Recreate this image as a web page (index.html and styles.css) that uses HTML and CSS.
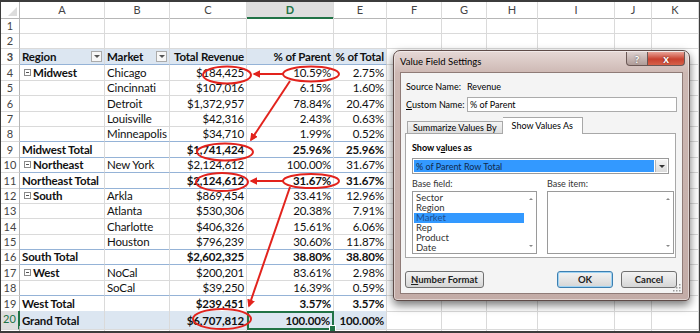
FILE: index.html
```html
<!DOCTYPE html>
<html lang="en">
<head>
  <meta charset="UTF-8">
  <title>Percent of Parent Row Total</title>
  <link rel="stylesheet" href="styles.css">
</head>
<body>
  <div class="frame">
    <div class="sheet" id="sheet"></div>
  </div>

  <svg class="marks" width="700" height="333" viewBox="0 0 700 333">
    <defs>
      <marker id="head" viewBox="0 0 10 10" refX="8" refY="5" markerWidth="4" markerHeight="4" orient="auto">
        <path d="M0 0 L10 5 L0 10 z" fill="#e2231d"/>
      </marker>
    </defs>
    <g fill="none" stroke="#e2231d" stroke-width="2">
      <ellipse cx="227" cy="75" rx="24" ry="8.5"/>
      <ellipse cx="311" cy="74" rx="28" ry="7.5"/>
      <ellipse cx="225" cy="152" rx="28" ry="8.5"/>
      <ellipse cx="222" cy="182" rx="26" ry="9"/>
      <ellipse cx="311" cy="181" rx="28" ry="7"/>
      <ellipse cx="222" cy="319" rx="29" ry="10"/>
      <path d="M283 74 L254 74" marker-end="url(#head)"/>
      <path d="M290 81 L251 140" marker-end="url(#head)"/>
      <path d="M283 181 L251 181" marker-end="url(#head)"/>
      <path d="M290 187 L249 306" marker-end="url(#head)"/>
    </g>
  </svg>

  <div class="dialog">
    <div class="dlg-title">
      <span>Value Field Settings</span>
      <div class="dlg-ctrls">
        <span class="ctrl-help">?</span>
        <span class="ctrl-close">x</span>
      </div>
    </div>
    <div class="dlg-body">
      <div class="field">
        <span class="label">Source Name:</span>
        <span>Revenue</span>
      </div>
      <div class="field">
        <span class="label"><u>C</u>ustom Name:</span>
        <div class="textbox">% of Parent</div>
      </div>
      <div class="tabs">
        <div class="tab">Summarize Values By</div>
        <div class="tab active">Show Values As</div>
      </div>
      <div class="panel">
        <div class="panel-title">Show v<u>a</u>lues as</div>
        <div class="combo">
          <div class="combo-value">% of Parent Row Total</div>
          <div class="combo-btn"><i class="tri-down"></i></div>
        </div>
        <div class="lists">
          <div class="list-col">
            <div class="list-label">Base field:</div>
            <div class="listbox">
              <div class="items">
                <div>Sector</div>
                <div>Region</div>
                <div class="sel">Market</div>
                <div>Rep</div>
                <div>Product</div>
                <div>Date</div>
              </div>
              <div class="scroll"><i class="tri-up"></i><i class="tri-down"></i></div>
            </div>
          </div>
          <div class="list-col">
            <div class="list-label">Base item:</div>
            <div class="listbox">
              <div class="items"></div>
              <div class="scroll"><i class="tri-up"></i><i class="tri-down"></i></div>
            </div>
          </div>
        </div>
      </div>
      <div class="actions">
        <button class="btn"><u>N</u>umber Format</button>
        <span class="spacer"></span>
        <button class="btn btn-default">OK</button>
        <button class="btn">Cancel</button>
      </div>
      <svg class="grip" width="8" height="8" viewBox="0 0 8 8">
        <g fill="#9a9a9a">
          <rect x="6" y="0" width="1.5" height="1.5"/>
          <rect x="3" y="3" width="1.5" height="1.5"/>
          <rect x="6" y="3" width="1.5" height="1.5"/>
          <rect x="0" y="6" width="1.5" height="1.5"/>
          <rect x="3" y="6" width="1.5" height="1.5"/>
          <rect x="6" y="6" width="1.5" height="1.5"/>
        </g>
      </svg>
    </div>
  </div>

  <script>
    const letters = ['A', 'B', 'C', 'D', 'E', 'F', 'G', 'H', 'I', 'J', 'K'];

    // pivot rows, starting at sheet row 3
    const pivot = [
      { type: 'head', cells: ['Region', 'Market', 'Total Revenue', '% of Parent', '% of Total'] },
      { type: 'group', cells: ['Midwest', 'Chicago', '$184,425', '10.59%', '2.75%'] },
      { cells: ['', 'Cincinnati', '$107,016', '6.15%', '1.60%'] },
      { cells: ['', 'Detroit', '$1,372,957', '78.84%', '20.47%'] },
      { cells: ['', 'Louisville', '$42,316', '2.43%', '0.63%'] },
      { cells: ['', 'Minneapolis', '$34,710', '1.99%', '0.52%'] },
      { type: 'total', cells: ['Midwest Total', '', '$1,741,424', '25.96%', '25.96%'] },
      { type: 'group', cells: ['Northeast', 'New York', '$2,124,612', '100.00%', '31.67%'] },
      { type: 'total', cells: ['Northeast Total', '', '$2,124,612', '31.67%', '31.67%'] },
      { type: 'group', cells: ['South', 'Arkla', '$869,454', '33.41%', '12.96%'] },
      { cells: ['', 'Atlanta', '$530,306', '20.38%', '7.91%'] },
      { cells: ['', 'Charlotte', '$406,326', '15.61%', '6.06%'] },
      { cells: ['', 'Houston', '$796,239', '30.60%', '11.87%'] },
      { type: 'total', cells: ['South Total', '', '$2,602,325', '38.80%', '38.80%'] },
      { type: 'group', cells: ['West', 'NoCal', '$200,201', '83.61%', '2.98%'] },
      { cells: ['', 'SoCal', '$39,250', '16.39%', '0.59%'] },
      { type: 'total', cells: ['West Total', '', '$239,451', '3.57%', '3.57%'] },
      { type: 'grand', cells: ['Grand Total', '', '$6,707,812', '100.00%', '100.00%'] }
    ];

    const rows = [{ cells: [] }, { cells: [] }, ...pivot];

    function renderCell(row, text, col) {
      const classes = ['cell'];
      if (col >= 2 && col <= 4) classes.push('num');
      if (row.type === 'grand' && col === 3) classes.push('active');
      let inner = text || '';
      if (row.type === 'group' && col === 0) {
        inner = `<i class="collapse"></i>${text}`;
      }
      if (row.type === 'head' && col < 2) {
        inner = `<span>${text}</span><i class="filter"></i>`;
        classes.push('split');
      }
      return `<div class="${classes.join(' ')}">${inner}</div>`;
    }

    const header = `<div class="row head"><div class="corner"></div>` +
      letters.map(l => `<div class="colhead${l === 'D' ? ' current' : ''}">${l}</div>`).join('') +
      `</div>`;

    const body = rows.map((row, i) => {
      const next = rows[i + 1] || {};
      const classes = ['row'];
      if (row.type) classes.push(row.type);
      if (row.type === 'total' || next.type === 'total' || next.type === 'grand') classes.push('rule');
      const cells = letters.map((l, c) => renderCell(row, row.cells[c], c)).join('');
      return `<div class="${classes.join(' ')}"><div class="rownum">${i + 1}</div>${cells}</div>`;
    }).join('');

    // row 21 only peeks in at the bottom edge
    const tail = `<div class="row tail"><div class="rownum"></div>` +
      letters.map(() => `<div class="cell"></div>`).join('') + `</div>`;

    document.getElementById('sheet').innerHTML = header + body + tail;
  </script>
</body>
</html>
```

FILE: styles.css
```css
:root {
  --cols: 19px 85px 65px 77px 87px 53px 55px 45px 51px 77px 37px 1fr;
  --grid-line: #dadada;
  --header-line: #b6b6b6;
  --excel-green: #217346;
  --pivot-blue: #dce6f1;
  --pivot-rule: #95b3d7;
  --text: #111;
}

* {
  box-sizing: border-box;
  margin: 0;
  padding: 0;
}

body {
  width: 700px;
  height: 333px;
  overflow: hidden;
  background: #fff;
  font-family: Lato, "Liberation Sans", sans-serif;
  color: var(--text);
}

.frame {
  width: 700px;
  height: 333px;
  border: 1px solid #3c3c3c;
  border-top-width: 2px;
  border-bottom-width: 2px;
  overflow: hidden;
}

/* ---------- sheet grid ---------- */

.row {
  display: grid;
  grid-template-columns: var(--cols);
  height: 15.4px;
  font-size: 11.5px;
  letter-spacing: -0.15px;
  line-height: 15px;
}

.row.head {
  height: 16px;
  font-size: 11px;
  letter-spacing: 0;
  line-height: 15px;
  color: #444;
}

.corner {
  background: #fff;
  border-right: 1px solid var(--header-line);
  border-bottom: 1px solid var(--header-line);
  position: relative;
}

.corner::after {
  content: "";
  position: absolute;
  right: 2px;
  bottom: 2px;
  border-left: 9px solid transparent;
  border-bottom: 9px solid #dcdcdc;
}

.colhead {
  text-align: center;
  border-right: 1px solid var(--grid-line);
  border-bottom: 1px solid var(--header-line);
}

.colhead.current {
  background: #dedede;
  color: var(--excel-green);
  font-weight: 700;
  border-bottom: 2px solid var(--excel-green);
}

.rownum {
  text-align: center;
  font-size: 11px;
  letter-spacing: 0;
  color: #444;
  border-right: 1px solid var(--header-line);
  border-bottom: 1px solid var(--grid-line);
}

.cell {
  padding: 0 2px;
  white-space: nowrap;
  border-right: 1px solid var(--grid-line);
  border-bottom: 1px solid var(--grid-line);
  display: flex;
  align-items: center;
  min-width: 0;
}

.cell.num {
  justify-content: flex-end;
}

.cell.split {
  justify-content: space-between;
}

/* pivot table style, columns A..E */
.row.head .cell:nth-child(-n+6),
.row.rule .cell:nth-child(-n+6) {
  border-bottom-color: var(--pivot-rule);
}

.row.head .cell:nth-child(-n+6) {
  background: var(--pivot-blue);
}

.row.head:not(:first-child) {
  font-size: 11.5px;
  letter-spacing: -0.15px;
  color: var(--text);
  font-weight: 700;
}

.row.group .cell:nth-child(2),
.row.total .cell,
.row.grand .cell {
  font-weight: 700;
}

.row.grand .cell:nth-child(-n+6) {
  background: var(--pivot-blue);
}

.row.grand .rownum {
  background: #dedede;
  color: var(--excel-green);
  border-right: 2px solid var(--excel-green);
}

.cell.active {
  position: relative;
  border: 2px solid var(--excel-green);
}

.cell.active::after {
  content: "";
  position: absolute;
  right: -4px;
  bottom: -4px;
  width: 5px;
  height: 5px;
  background: var(--excel-green);
  border: 1px solid #fff;
}

.collapse {
  width: 7px;
  height: 7px;
  border: 1px solid #8a8a8a;
  margin: 0 2px 0 2px;
  position: relative;
  flex: none;
}

.collapse::after {
  content: "";
  position: absolute;
  left: 1px;
  right: 1px;
  top: 2px;
  height: 1px;
  background: #555;
}

.filter {
  width: 11px;
  height: 11px;
  border: 1px solid #ababab;
  background: #f7f7f7;
  position: relative;
  flex: none;
}

.filter::after {
  content: "";
  position: absolute;
  left: 2px;
  top: 3px;
  border-left: 3px solid transparent;
  border-right: 3px solid transparent;
  border-top: 3px solid #555;
}

/* ---------- annotations ---------- */

.marks {
  position: absolute;
  top: 0;
  left: 0;
  pointer-events: none;
}

/* ---------- dialog ---------- */

.dialog {
  position: absolute;
  left: 393px;
  top: 50px;
  width: 297px;
  height: 251px;
  display: flex;
  flex-direction: column;
  border: 1px solid #5e4b48;
  border-radius: 7px 7px 4px 4px;
  background: linear-gradient(#e6d9d6, #cdb8b3 22px, #c3aca7);
  box-shadow: 0 4px 10px rgba(0, 0, 0, 0.55), inset 0 0 0 1px rgba(255, 255, 255, 0.45);
  font-size: 9px;
  color: #000;
}

.dlg-title {
  height: 21px;
  display: flex;
  align-items: center;
  padding-left: 6px;
  font-size: 9.5px;
  position: relative;
}

.dlg-ctrls {
  position: absolute;
  top: 1px;
  right: 4px;
  display: flex;
}

.dlg-ctrls span {
  height: 14px;
  display: flex;
  align-items: center;
  justify-content: center;
  color: #fff;
  font-weight: 700;
  border: 1px solid #6b5855;
  border-top: none;
}

.ctrl-help {
  width: 22px;
  font-size: 10px;
  border-radius: 0 0 0 4px;
  background: linear-gradient(#ddd1cf, #b09c98);
  text-shadow: 0 0 2px #444;
}

.ctrl-close {
  width: 37px;
  font-size: 11px;
  border-left: none !important;
  border-radius: 0 0 4px 0;
  background: linear-gradient(#e9a397, #c8412f 55%, #d7614a);
  text-shadow: 0 0 2px #5a150d;
}

.dlg-body {
  flex: 1;
  margin: 0 6px 6px;
  background: #f4f4f4;
  border: 1px solid #8f7b77;
  padding: 6px 4px 0;
  position: relative;
}

.field {
  display: flex;
  align-items: center;
  height: 15px;
  margin-bottom: 3px;
  white-space: nowrap;
}

.field .label {
  width: 62px;
  flex: none;
  padding-left: 1px;
}

.textbox {
  flex: 1;
  height: 15px;
  margin-right: 1px;
  border: 1px solid #ababab;
  background: #fff;
  padding: 0 2px;
  line-height: 13px;
}

.tabs {
  display: flex;
  align-items: flex-end;
  height: 17px;
  margin-top: 4px;
  padding-left: 2px;
}

.tab {
  height: 12px;
  padding: 0 5px;
  border: 1px solid #a8a8a8;
  border-bottom: none;
  background: linear-gradient(#f4f4f4, #dedede);
  line-height: 11px;
  white-space: nowrap;
}

.tab.active {
  height: 17px;
  padding: 0 9px;
  line-height: 15px;
  background: #fff;
  border-left: none;
  position: relative;
  top: 1px;
}

.panel {
  height: 125px;
  margin-right: 2px;
  background: #fff;
  border: 1px solid #a8a8a8;
  padding: 8px 6px 0;
}

.panel-title {
  font-weight: 700;
  line-height: 11px;
}

.combo {
  display: flex;
  height: 16px;
  margin-top: 5px;
  border: 1px solid #9a9a9a;
  background: #fff;
  padding: 1px;
}

.combo-value {
  flex: 1;
  background: #3399ff;
  color: #10294d;
  line-height: 13px;
  padding-left: 2px;
}

.combo-btn {
  width: 12px;
  display: flex;
  align-items: center;
  justify-content: center;
  margin-left: 1px;
  background: linear-gradient(#f4f4f4, #dadada);
  border-left: 1px solid #b5b5b5;
}

.tri-down,
.tri-up {
  display: block;
  border-left: 3px solid transparent;
  border-right: 3px solid transparent;
}

.tri-down { border-top: 3px solid #333; }
.tri-up { border-bottom: 3px solid #333; }

.lists {
  display: grid;
  grid-template-columns: 125px 127px;
  gap: 10px;
  margin-top: 4px;
}

.list-label {
  color: #333;
  line-height: 11px;
  margin-bottom: 2px;
}

.listbox {
  display: flex;
  height: 63px;
  border: 1px solid #9a9a9a;
  background: #fff;
}

.items {
  flex: 1;
  padding: 1px 1px 0;
  line-height: 10px;
  font-size: 9.5px;
  color: #333;
}

.items div {
  padding-left: 2px;
}

.items .sel {
  background: #3399ff;
  color: #1d4f8f;
}

.scroll {
  width: 11px;
  display: flex;
  flex-direction: column;
  justify-content: space-between;
  align-items: center;
  padding: 6px 0 6px;
}

.scroll i {
  border-left-width: 2.5px;
  border-right-width: 2.5px;
}

.scroll .tri-up { border-bottom: 2.5px solid #888; }
.scroll .tri-down { border-top: 2.5px solid #888; }

.actions {
  display: flex;
  gap: 8px;
  margin-top: 13px;
}

.spacer {
  flex: 1;
}

.btn {
  height: 17px;
  padding: 0 5px;
  border: 1px solid #707070;
  border-radius: 3px;
  background: linear-gradient(#f3f3f3, #e5e5e5 50%, #d5d5d5);
  font-family: inherit;
  font-size: 9.5px;
  font-weight: 700;
  color: #222;
}

.btn-default {
  width: 56px;
  border-color: #3c7fb1;
  box-shadow: inset 0 0 0 1px #9fd3f3;
}

.btn:last-child {
  width: 56px;
  margin-right: 1px;
}

.grip {
  position: absolute;
  right: 1px;
  bottom: 1px;
}
```
